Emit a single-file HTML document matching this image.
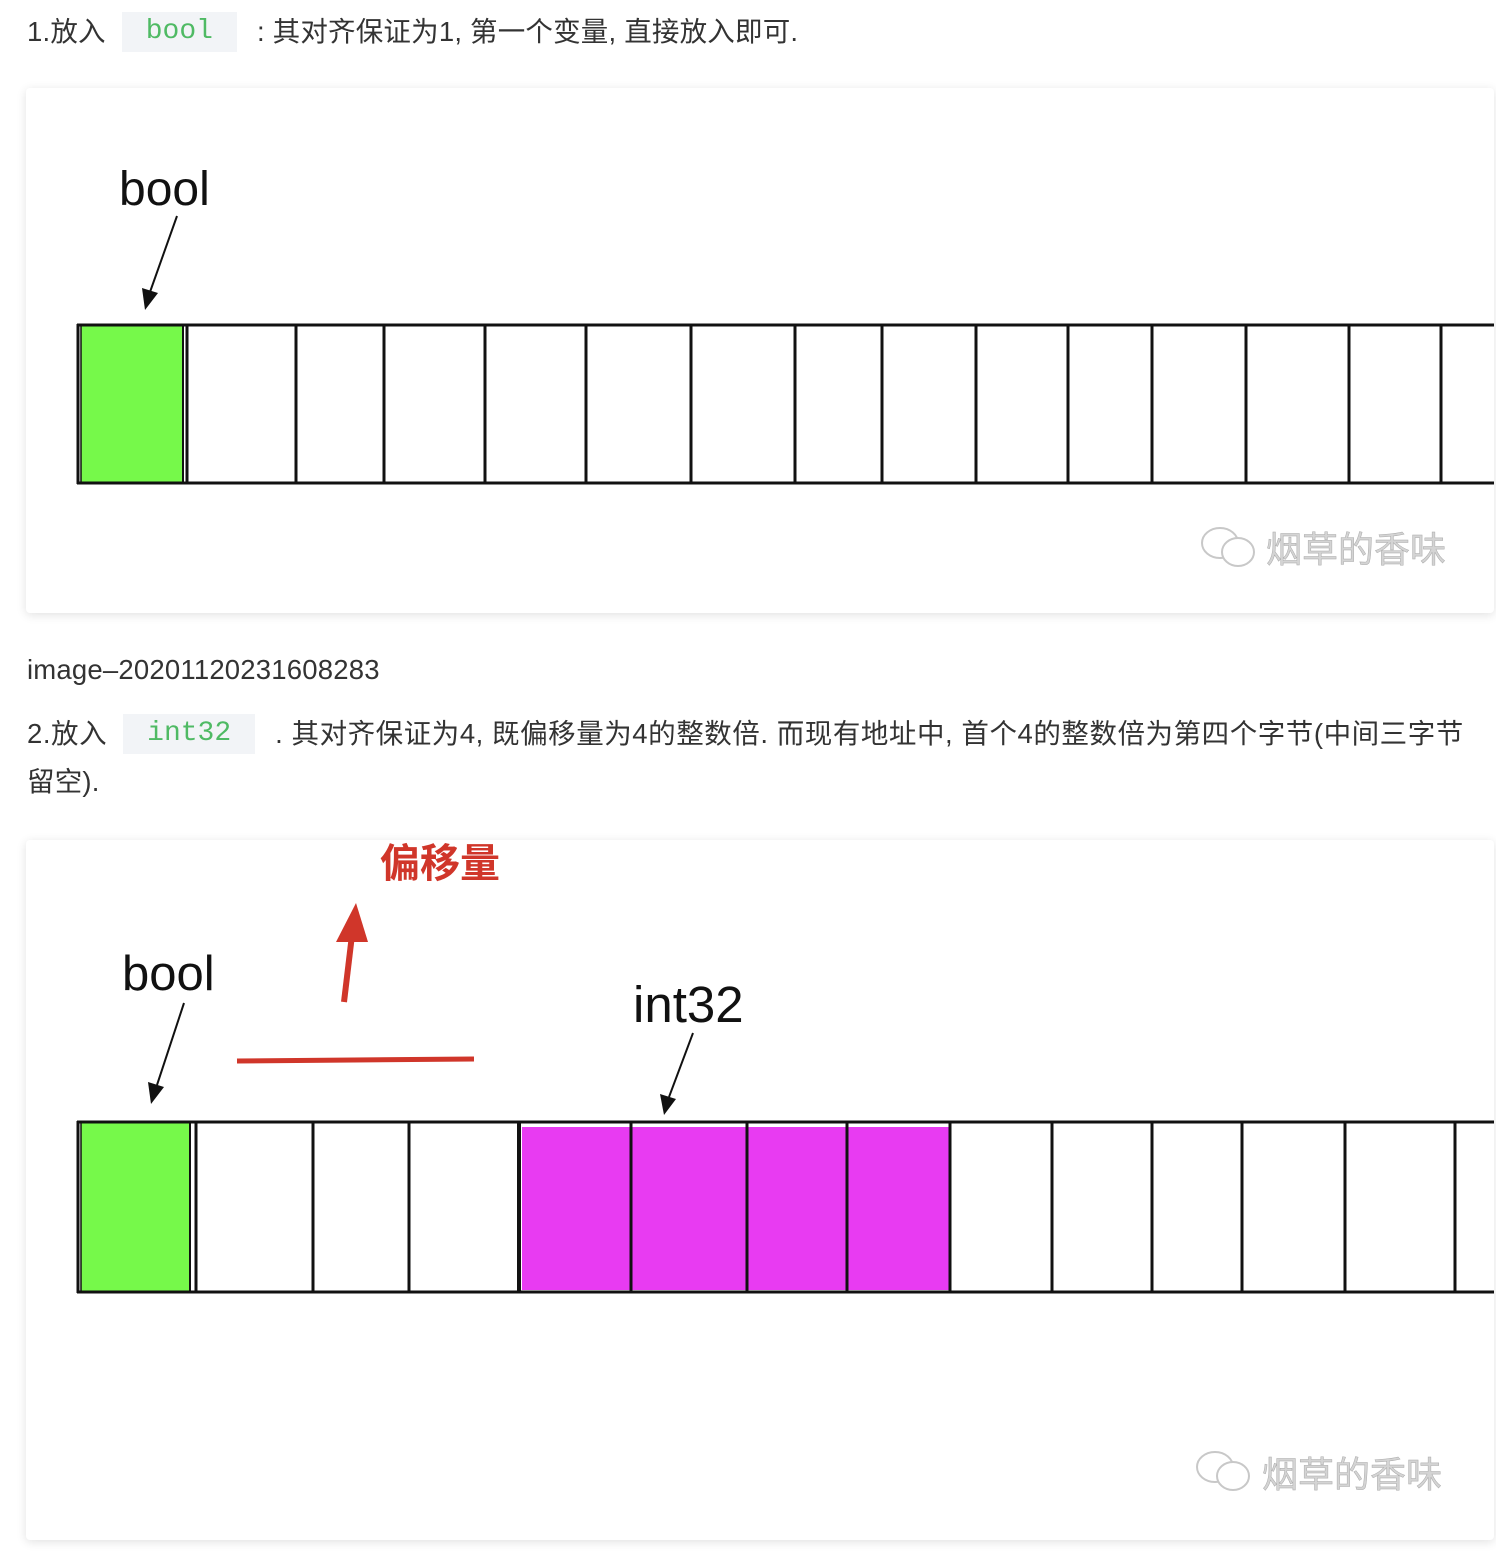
<!DOCTYPE html>
<html><head><meta charset="utf-8">
<style>
html,body{margin:0;padding:0;background:#fff;}
body{width:1496px;height:1562px;position:relative;overflow:hidden;font-family:"Liberation Sans","Noto Sans CJK SC",sans-serif;color:#333;}
.t{position:absolute;left:27px;font-size:27.5px;white-space:nowrap;line-height:40px;letter-spacing:0.2px;}
.code{display:inline-block;background:#f2f4f7;color:#4fba64;font-family:"Liberation Mono","DejaVu Sans Mono",monospace;font-size:28px;padding:0 24px;height:40px;line-height:40px;vertical-align:top;margin:0 20px 0 16px;letter-spacing:0;}
.card{position:absolute;left:26px;width:1468px;background:#fff;box-shadow:0 2px 10px rgba(0,0,0,0.12);border-radius:4px;overflow:hidden;}
</style></head><body>

<div class="t" style="top:12px;">1.放入<span class="code">bool</span>: 其对齐保证为1, 第一个变量, 直接放入即可.</div>

<div class="card" style="top:88px;height:525px;">
<svg width="1468" height="525" viewBox="26 88 1468 525" xmlns="http://www.w3.org/2000/svg">
<text x="119" y="205" font-family="Liberation Sans,sans-serif" font-size="48" fill="#111">bool</text>
<line x1="177" y1="216" x2="150" y2="292" stroke="#111" stroke-width="2"/>
<polygon points="142,288 158,293 145,310" fill="#111"/>
<rect x="81" y="326" width="101" height="156" fill="#76f94a"/>
<line x1="77" y1="325" x2="1496" y2="325" stroke="#111" stroke-width="3"/>
<line x1="77" y1="483" x2="1496" y2="483" stroke="#111" stroke-width="3"/>
<g stroke="#111" stroke-width="3">
<line x1="78" y1="324" x2="78" y2="484"/><line x1="81" y1="324" x2="81" y2="484" stroke-width="1.5"/>
<line x1="183" y1="324" x2="183" y2="484" stroke-width="2"/><line x1="187" y1="324" x2="187" y2="484"/>
<line x1="296" y1="324" x2="296" y2="484"/><line x1="384" y1="324" x2="384" y2="484"/>
<line x1="485" y1="324" x2="485" y2="484"/><line x1="586" y1="324" x2="586" y2="484"/>
<line x1="691" y1="324" x2="691" y2="484"/><line x1="795" y1="324" x2="795" y2="484"/>
<line x1="882" y1="324" x2="882" y2="484"/><line x1="976" y1="324" x2="976" y2="484"/>
<line x1="1068" y1="324" x2="1068" y2="484"/><line x1="1152" y1="324" x2="1152" y2="484"/>
<line x1="1246" y1="324" x2="1246" y2="484"/><line x1="1349" y1="324" x2="1349" y2="484"/>
<line x1="1441" y1="324" x2="1441" y2="484"/>
</g>
<g fill="none" stroke="#c8c8c8" stroke-width="2">
<ellipse cx="1220" cy="543" rx="18" ry="15"/><ellipse cx="1238" cy="552" rx="16" ry="14" fill="#fff"/>
</g>
<text x="1266" y="562" font-family="Noto Sans CJK SC,sans-serif" font-size="36" fill="#d4d4d4" stroke="#aaa" stroke-width="0.5">烟草的香味</text>
</svg>
</div>

<div class="t" style="top:650px;">image–20201120231608283</div>
<div class="t" style="top:714px;letter-spacing:0.55px;">2.放入<span class="code">int32</span>. 其对齐保证为4, 既偏移量为4的整数倍. 而现有地址中, 首个4的整数倍为第四个字节(中间三字节</div>
<div class="t" style="top:762px;">留空).</div>

<div class="card" style="top:840px;height:700px;">
<svg width="1468" height="700" viewBox="26 840 1468 700" xmlns="http://www.w3.org/2000/svg">
<text x="380" y="877" font-family="Noto Sans CJK SC,sans-serif" font-size="40" font-weight="bold" fill="#d0362a">偏移量</text>
<line x1="344" y1="1002" x2="352" y2="935" stroke="#d0362a" stroke-width="6"/>
<polygon points="336,942 368,942 356,903" fill="#d0362a"/>
<line x1="237" y1="1061" x2="474" y2="1059" stroke="#d0362a" stroke-width="5"/>
<text x="122" y="990" font-family="Liberation Sans,sans-serif" font-size="49" fill="#111">bool</text>
<line x1="184" y1="1003" x2="157" y2="1085" stroke="#111" stroke-width="2"/>
<polygon points="148,1082 164,1087 151,1104" fill="#111"/>
<text x="633" y="1022" font-family="Liberation Sans,sans-serif" font-size="51" fill="#111">int32</text>
<line x1="693" y1="1033" x2="669" y2="1097" stroke="#111" stroke-width="2"/>
<polygon points="660,1094 676,1099 664,1115" fill="#111"/>
<rect x="81" y="1123" width="108" height="168" fill="#76f94a"/>
<rect x="522" y="1127" width="428" height="163" fill="#e83bf2"/>
<line x1="77" y1="1122" x2="1496" y2="1122" stroke="#111" stroke-width="3"/>
<line x1="77" y1="1292" x2="1496" y2="1292" stroke="#111" stroke-width="3"/>
<g stroke="#111" stroke-width="3">
<line x1="78" y1="1121" x2="78" y2="1293"/><line x1="81" y1="1121" x2="81" y2="1293" stroke-width="1.5"/>
<line x1="190" y1="1121" x2="190" y2="1293" stroke-width="2"/><line x1="196" y1="1121" x2="196" y2="1293"/>
<line x1="313" y1="1121" x2="313" y2="1293"/><line x1="409" y1="1121" x2="409" y2="1293"/>
<line x1="519" y1="1121" x2="519" y2="1293" stroke-width="4"/><line x1="631" y1="1121" x2="631" y2="1293"/>
<line x1="747" y1="1121" x2="747" y2="1293"/><line x1="847" y1="1121" x2="847" y2="1293"/>
<line x1="950" y1="1121" x2="950" y2="1293"/><line x1="1052" y1="1121" x2="1052" y2="1293"/>
<line x1="1152" y1="1121" x2="1152" y2="1293"/><line x1="1242" y1="1121" x2="1242" y2="1293"/>
<line x1="1345" y1="1121" x2="1345" y2="1293"/><line x1="1455" y1="1121" x2="1455" y2="1293"/>
</g>
<g fill="none" stroke="#c8c8c8" stroke-width="2">
<ellipse cx="1215" cy="1467" rx="18" ry="15"/><ellipse cx="1233" cy="1476" rx="16" ry="14" fill="#fff"/>
</g>
<text x="1262" y="1487" font-family="Noto Sans CJK SC,sans-serif" font-size="36" fill="#d4d4d4" stroke="#aaa" stroke-width="0.5">烟草的香味</text>
</svg>
</div>

</body></html>
